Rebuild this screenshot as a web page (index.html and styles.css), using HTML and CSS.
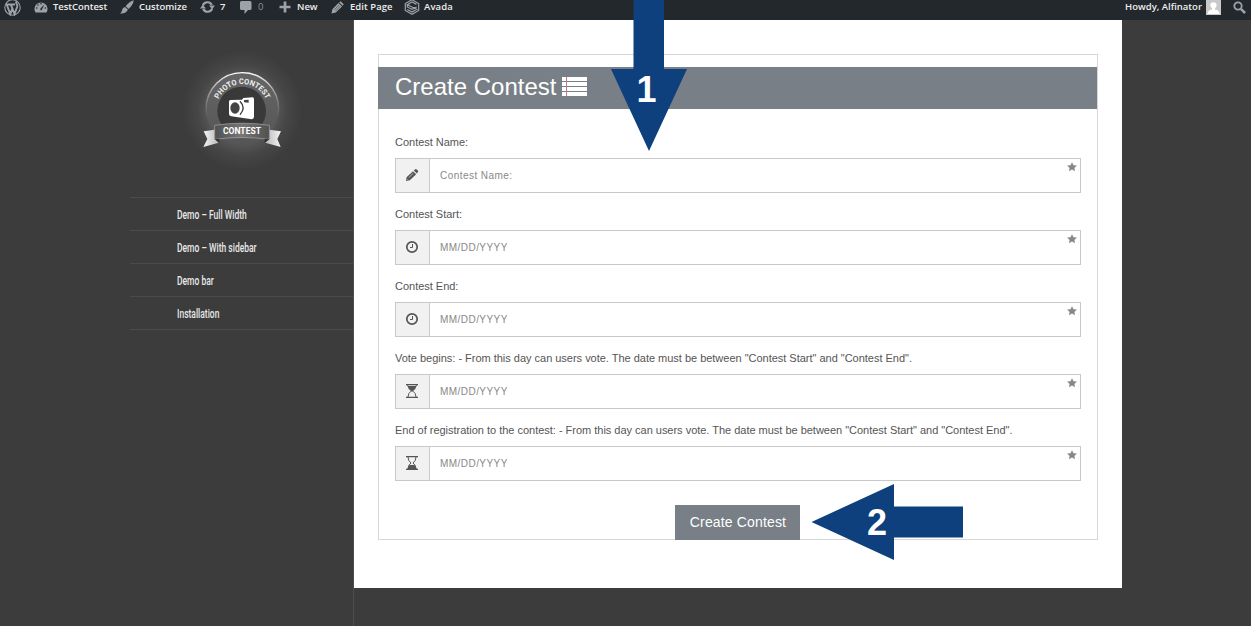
FILE: index.html
```
<!DOCTYPE html>
<html lang="en">
<head>
<meta charset="utf-8">
<title>Create Contest</title>
<link rel="stylesheet" href="styles.css">
</head>
<body>
<svg class="defs" width="0" height="0">
  <symbol id="star" viewBox="0 0 10 10"><path d="M5 .2 6.5 3.3 9.900 3.600 7.400 5.900 8 9.300 5 7.600 2 9.300 2.600 5.900 .1 3.600 3.500 3.300Z"/></symbol>
  <symbol id="clock" viewBox="0 0 14 14"><circle cx="7" cy="7" r="5.200" fill="none" stroke="currentColor" stroke-width="1.700"/><path d="M7.500 4v3.500H5" fill="none" stroke="currentColor"/></symbol>
  <symbol id="pencil" viewBox="0 0 14 14"><path d="M1 13 1.600 9.200 8 3.200 11.200 6.200 4.800 12.300ZM8.800 2.500 10 1.400Q10.900.700 11.700 1.400L12.900 2.500Q13.600 3.200 12.900 4L11.900 5.400Z"/><path d="M3.800 9.500 8.400 5.200M2.400 11.500l.8.5" stroke="#eee" stroke-width=".6"/></symbol>
</svg>
<header class="bar">
  <nav class="bar-left">
    <a class="item wp"><svg width="17" height="17" viewBox="0 0 17 17"><circle cx="8.500" cy="8.500" r="7.700" fill="none" stroke="#9ca2a7" stroke-width="1.100"/><path d="M2.700 5.500 6.300 15.100 8.300 9.600 6.800 5.500M6.900 5.500 10.500 15.100 13.100 8Q13.700 6 12.500 4.500 11.500 3 13 2.900M2 5.500h5M7 5.500h4" fill="none" stroke="#9ca2a7" stroke-width="1.900"/></svg></a>
    <a class="item site"><svg width="14" height="12" viewBox="0 0 14 12"><path d="M1.500 11.500A6.500 6.500 0 1 1 12.500 11.500Z" fill="#9ca2a7"/><g fill="#23282d"><circle cx="2.700" cy="7" r=".8"/><circle cx="4" cy="4" r=".8"/><circle cx="7" cy="2.700" r=".8"/><circle cx="11.300" cy="7" r=".8"/><path d="M10.400 3.300 8 8.500Q7.700 9.600 6.700 9.300 5.900 8.800 6.500 7.600Z"/></g></svg><span>TestContest</span></a>
    <a class="item custom"><svg width="14" height="14" viewBox="0 0 14 14" fill="#9ca2a7"><path d="M13.800.200Q13 5 8.500 9L5.600 6.300Q9.500 1.200 13.800.200ZM5 6.900 7.900 9.600Q6.200 14 0 13.500 2 12.200 2.100 10 2.500 7.200 5 6.900Z"/></svg><span>Customize</span></a>
    <a class="item upd"><svg width="15" height="12" viewBox="0 0 15 12"><path d="M2.900 4.500A4.800 4.800 0 0 1 11.800 4M12.100 7.500A4.800 4.800 0 0 1 3.200 8" fill="none" stroke="#9ca2a7" stroke-width="2.200"/><path d="M0 7.600 2.800 3.700 6 7.600ZM15 4.400 12.200 8.300 9 4.400Z" fill="#9ca2a7"/></svg><span>7</span></a>
    <a class="item com"><svg width="12" height="13" viewBox="0 0 12 13"><path d="M1.500 0h8.500q1.500 0 1.500 1.500v6Q11.500 9 10 9H8L4.500 13V9h-3Q0 9 0 7.500v-6Q0 0 1.500 0Z" fill="#9ca2a7"/></svg><span class="dim">0</span></a>
    <a class="item new"><svg width="12" height="12" viewBox="0 0 12 12"><path d="M6 .5v11M.5 6h11" stroke="#9ca2a7" stroke-width="2.700"/></svg><span>New</span></a>
    <a class="item edit"><svg width="13" height="13" viewBox="0 0 14 14" fill="#9ca2a7"><path d="M.5 13.500 1.500 8.800 8 2.200 11.900 6 5.200 12.500ZM8.800 1.500 10.300.300 13.700 3.600 12.600 5.200Z"/><path d="M3.700 9.300 8.700 4.200M4.900 10.800 10 5.700" stroke="#23282d" stroke-width=".5"/></svg><span>Edit Page</span></a>
    <a class="item avada"><svg width="16" height="16" viewBox="0 0 16 16" fill="none" stroke="#9ca2a7" stroke-width="1.200"><path d="M8 .800 14.700 4.500v7L8 15.200 1.300 11.500v-7ZM12.500 5.400 8 3 3.300 5.700 12.700 10.300 8 13 3.300 10.500M3.300 5.700v2.300L8 10.300l4.700-2.300"/></svg><span>Avada</span></a>
  </nav>
  <div class="bar-right">
    <span>Howdy, Alfinator</span>
    <svg class="avatar" width="15" height="15" viewBox="0 0 15 15"><path fill="#c9c9c9" d="M0 0h15v15H0z"/><circle cx="7.500" cy="5.300" r="3.100" fill="#fff"/><path d="M1.500 14q0-4 4.500-4.500V8h3v1.500q4.500.5 4.500 4.500Z" fill="#fff"/></svg>
    <svg class="search" width="13" height="13" viewBox="0 0 13 13" fill="none" stroke="#9ca2a7"><circle cx="5" cy="5" r="3.700" stroke-width="1.800"/><path d="m7.800 7.800 4.300 4.200" stroke-width="2.500"/></svg>
  </div>
</header>
<div class="page">
  <aside class="side">
    <svg class="logo" width="124" height="120" viewBox="0 0 372 360">
      <defs>
        <radialGradient id="halo"><stop offset=".5" stop-color="#5c5c5c"/><stop offset=".75" stop-color="#464646"/><stop offset="1" stop-color="#3c3c3c"/></radialGradient>
        <linearGradient id="ring" x2="0" y2="1"><stop stop-color="#666"/><stop offset="1" stop-color="#555"/></linearGradient>
        <linearGradient id="rim" x2="0" y2="1"><stop stop-color="#fff"/><stop offset=".65" stop-color="#999" stop-opacity="0"/></linearGradient>
        <linearGradient id="band"><stop stop-color="#505050"/><stop offset=".5" stop-color="#777"/><stop offset="1" stop-color="#505050"/></linearGradient>
        <linearGradient id="tail-left"><stop stop-color="#f4f4f4"/><stop offset="1" stop-color="#b8b8b8"/></linearGradient>
        <linearGradient id="tail-right"><stop stop-color="#b8b8b8"/><stop offset="1" stop-color="#f4f4f4"/></linearGradient>
        <path id="arc" d="M109 180A78 78 0 0 1 265 180"/>
      </defs>
      <circle cx="187" cy="180" r="180" fill="url(#halo)"/>
      <circle cx="187" cy="177" r="109" fill="url(#ring)" stroke="url(#rim)" stroke-width="4"/>
      <circle cx="185" cy="183" r="73" fill="#393939"/>
      <text class="arc-text"><textPath href="#arc" startOffset="50%" text-anchor="middle" textLength="178" lengthAdjust="spacingAndGlyphs">PHOTO CONTEST</textPath></text>
      <path d="M151 150 186 149 190 144 218 142Q222 142 222 148V200Q222 207 215 208L154 199Q147 198 147 192V155Q147 150 151 150Z" fill="#fff"/>
      <ellipse cx="165" cy="174" rx="14" ry="17" fill="#444"/>
      <path d="M180 154q19 20 0 40" fill="none" stroke="#3d3d3d" stroke-width="4"/><path d="M192 150 206 149V158L192 157Z" fill="#444"/>
      <path d="M71 244 104 239V267L116 278 70 291 82 267Z" fill="url(#tail-left)"/>
      <path d="M303 244 268 239V267L256 278 302 291 292 267Z" fill="url(#tail-right)"/>
      <path d="M104 226Q187 213 268 226V268Q187 257 104 268Z" fill="url(#band)" stroke="#aaa" stroke-width="2"/>
      <path d="M104 268l14 10v-12ZM268 268l-14 10v-12Z" fill="#333"/>
      <text x="186" y="251" class="band-text" text-anchor="middle" textLength="114" lengthAdjust="spacingAndGlyphs">CONTEST</text>
    </svg>
    <nav class="menu">
      <a><span>Demo – Full Width</span></a>
      <a><span>Demo – With sidebar</span></a>
      <a><span>Demo bar</span></a>
      <a><span>Installation</span></a>
    </nav>
  </aside>
  <main class="content">
    <form class="panel">
      <h1 class="title">Create Contest <svg width="25" height="20" viewBox="0 0 25 20"><path d="M0 0h25v4H0zM0 5h25v4H0zM0 10h25v4H0zM0 15h25v4H0z" fill="#fff"/><path d="M4.500 0v19" stroke="#c17c82" stroke-width="1"/></svg></h1>
      <div class="fields">
        <label>Contest Name:</label>
        <div class="field"><i><svg width="14" height="14"><use href="#pencil"/></svg></i><span>Contest Name:</span><svg class="star" width="10" height="10"><use href="#star"/></svg></div>
        <label>Contest Start:</label>
        <div class="field"><i><svg width="14" height="14"><use href="#clock"/></svg></i><span>MM/DD/YYYY</span><svg class="star" width="10" height="10"><use href="#star"/></svg></div>
        <label>Contest End:</label>
        <div class="field"><i><svg width="14" height="14"><use href="#clock"/></svg></i><span>MM/DD/YYYY</span><svg class="star" width="10" height="10"><use href="#star"/></svg></div>
        <label>Vote begins: - From this day can users vote. The date must be between "Contest Start" and "Contest End".</label>
        <div class="field"><i><svg width="12" height="14" viewBox="0 0 12 14"><path d="M0 0h12v1.200H0zM0 12.800h12V14H0zM1.500 2h9Q10 5 7 7H5Q2 5 1.500 2Z"/><path d="M1.700 1v1M10.300 1v1M2 13Q2 9 5.300 7h1.400Q10 9 10 13" fill="none" stroke="currentColor"/></svg></i><span>MM/DD/YYYY</span><svg class="star" width="10" height="10"><use href="#star"/></svg></div>
        <label>End of registration to the contest: - From this day can users vote. The date must be between "Contest Start" and "Contest End".</label>
        <div class="field"><i><svg width="12" height="14" viewBox="0 0 12 14"><path d="M0 0h12v1.200H0zM0 12.800h12V14H0zM1.500 12.800Q2 10 3.700 9h4.600Q10 10 10.500 12.800Z"/><path d="M2 1Q2 5 5 7 2 9 2 13M10 1Q10 5 7 7 10 9 10 13" fill="none" stroke="currentColor"/></svg></i><span>MM/DD/YYYY</span><svg class="star" width="10" height="10"><use href="#star"/></svg></div>
      </div>
      <button class="submit" type="button">Create Contest</button>
    </form>
  </main>
</div>
<svg class="arrow one" width="78" height="152" viewBox="0 0 78 152"><path d="M23.500 0H54V69H77L39 151 1 69H23.500Z"/><text x="36.500" y="102" text-anchor="middle">1</text></svg>
<svg class="arrow two" width="154" height="78" viewBox="0 0 154 78"><path d="M.5 39 83 1V23.500H152V54.500H83V77Z"/><text x="66" y="52" text-anchor="middle">2</text></svg>
</body>
</html>
```
FILE: styles.css
```
* { box-sizing: border-box; }
body { margin: 0; height: 626px; overflow: hidden; background: #3c3c3c; font-family: "Liberation Sans", Arial, sans-serif; }
.defs { position: absolute; }
svg { display: block; flex: none; }

.bar { height: 20px; background: #23282d; display: flex; justify-content: space-between; color: #eee; font: 600 9.5px/14px "Open Sans", sans-serif; }
.bar-left { display: flex; padding-left: 4px; }
.item { display: flex; align-items: center; height: 14px; gap: 5px; white-space: nowrap; letter-spacing: -.05px; }
.wp { width: 30px; }
.site { width: 86px; }
.custom { width: 80px; letter-spacing: 0; }
.upd { width: 40px; }
.com { width: 39px; gap: 6px; }
.new { width: 52px; gap: 6px; }
.edit { width: 73px; gap: 6px; letter-spacing: .05px; }
.avada { gap: 4px; letter-spacing: .1px; }
.dim { color: #8c9196; font-weight: 400; }
.bar-right { display: flex; align-items: center; height: 14px; padding-right: 5px; }
.avatar { margin: 0 12px 0 4px; }

.page { display: flex; height: 606px; }
.side { width: 354px; border-right: 1px solid #4d4d4d; padding: 30px 0 0 130px; }
.logo { margin: 0 0 27px 50px; }
.arc-text { font: 700 23px Roboto, sans-serif; fill: #eee; }
.band-text { font: 700 29px Roboto, sans-serif; fill: #fff; }
.menu { border-top: 1px solid #4b4b4b; }
.menu a { display: flex; align-items: center; height: 33px; padding-left: 47px; border-bottom: 1px solid #4b4b4b; color: #e8e8e8; font: 500 13.5px/16px Roboto, sans-serif; }
.menu span { display: block; white-space: nowrap; transform-origin: left; transform: scaleX(.63); }

.content { width: 768px; height: 568px; background: #fff; padding: 34px 24px 0; }
.panel { display: flex; flex-direction: column; height: 486px; border: 1px solid #d7d7d7; padding-top: 12px; }
.title { display: flex; align-items: center; gap: 6px; margin: 0 0 0 -1px; height: 42px; padding: 0 0 2px 17px; background: #787f86; color: #fff; font-size: 24px; font-weight: 400; flex: none; }
.fields { padding: 24px 16px 0; }
.fields label { display: block; height: 25px; line-height: 18px; font-size: 11px; letter-spacing: -.016px; color: #555; white-space: nowrap; }
.field { display: flex; height: 35px; margin-bottom: 12px; border: 1px solid #c9c9c9; }
.field i { display: flex; align-items: center; justify-content: center; width: 34px; padding: 0 1px 1px 0; background: #f1f1f1; border-right: 1px solid #c9c9c9; color: #555; }
.field svg { fill: currentColor; }
.field span { flex: 1; padding-left: 10px; font-size: 10px; line-height: 33px; letter-spacing: .45px; color: #888; }
.field .star { margin: 3px 3px 0 0; color: #888; }
.submit { flex: none; align-self: center; width: 125px; height: 35px; margin: 12px 0 -1px -1px; padding: 0 0 2px 1px; border: 0; background: #787f86; color: #fff; font: 14px "Liberation Sans", Arial, sans-serif; letter-spacing: .15px; }

.arrow { position: absolute; fill: #0d407c; }
.arrow text { fill: #fff; font: bold 36px "Liberation Sans", Arial, sans-serif; }
.one { left: 610px; top: 0; }
.two { left: 811px; top: 483px; }
```
